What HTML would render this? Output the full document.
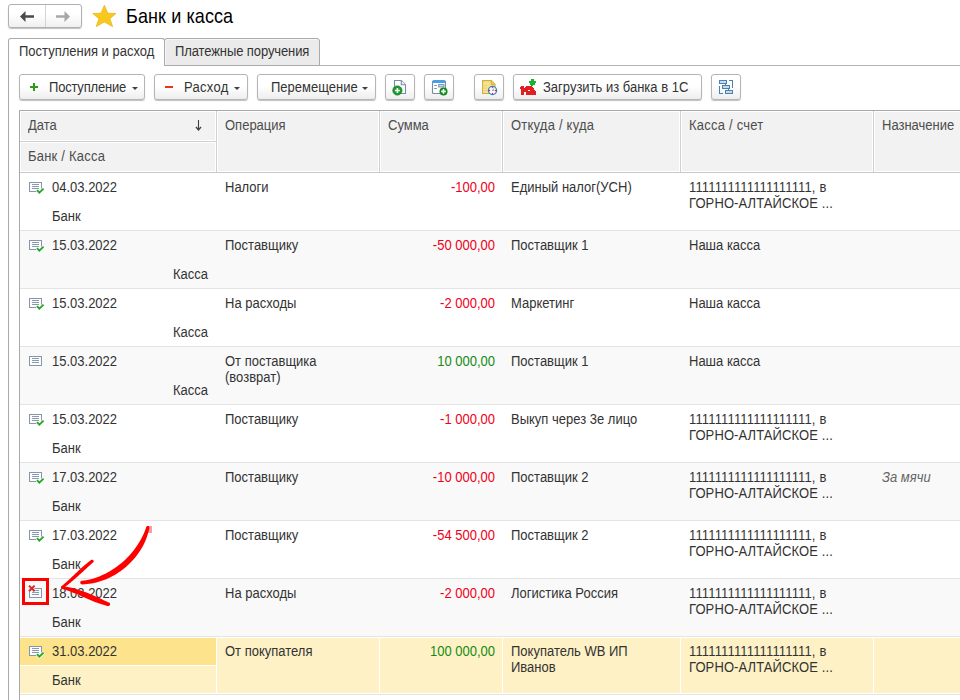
<!DOCTYPE html>
<html><head><meta charset="utf-8">
<style>
*{box-sizing:border-box;margin:0;padding:0}
html,body{width:960px;height:700px;overflow:hidden;background:#fff;font-family:"Liberation Sans",sans-serif;font-size:13px;color:#333}
.a{position:absolute}
.t{position:absolute;white-space:pre;line-height:16px;transform:scaleY(1.06);transform-origin:0 12px}
.btn{position:absolute;top:74px;height:26px;border:1px solid #b5b5b5;border-radius:3px;background:linear-gradient(#fff 0%,#fff 45%,#eeeeee 100%);box-shadow:0 1px 1px rgba(0,0,0,.25)}
.hd{position:absolute;background:#f2f2f2;border:1px solid #fff}
.row{position:absolute;left:20px;width:940px;height:58px}
.vd{position:absolute;width:1px;background:#d0d0d0}
</style></head><body>

<!-- nav buttons -->
<div class="a" style="left:8px;top:4px;width:74px;height:24px;border:1px solid #b0b0b0;border-radius:3px;background:linear-gradient(#fff 0%,#fff 40%,#f0f0f0 100%);box-shadow:0 1px 1px rgba(0,0,0,.25)"></div>
<div class="a" style="left:45px;top:5px;width:1px;height:22px;background:#d4d4d4"></div>
<svg class="a" style="left:19px;top:10px" width="16" height="13" viewBox="0 0 16 13"><path d="M1 6.5 L6.5 1 L6.5 5.3 L15 5.3 L15 7.7 L6.5 7.7 L6.5 12 Z" fill="#4a4a4a"/></svg>
<svg class="a" style="left:55px;top:10px" width="16" height="13" viewBox="0 0 16 13"><path d="M15 6.5 L9.5 1 L9.5 5.3 L1 5.3 L1 7.7 L9.5 7.7 L9.5 12 Z" fill="#a8a8a8"/></svg>
<!-- star -->
<svg class="a" style="left:88px;top:0" width="34" height="32" viewBox="88 0 34 32"><path d="M104.4 5.3L107.8 13.2L116 13.5L109.9 18.7L112.6 26.6L104.4 22L96.2 26.6L98.9 18.7L92.8 13.5L101 13.2Z" fill="#f8c91c" stroke="#e6b20e" stroke-width=".7" stroke-linejoin="round"/></svg>
<div class="t" style="left:126px;top:7px;font-size:18px;line-height:20px;color:#000;transform:scaleY(1.1);transform-origin:0 16px;letter-spacing:.1px">Банк и касса</div>

<!-- tabs -->
<div class="a" style="left:164px;top:65px;width:796px;height:1px;background:#b4b4b4"></div>
<div class="a" style="left:8px;top:38px;width:157px;height:28px;border:1px solid #aaaaaa;border-bottom:none;border-radius:3px 3px 0 0;background:#fff"></div>
<div class="a" style="left:8px;top:60px;width:1px;height:640px;background:#aaaaaa"></div>
<div class="a" style="left:164px;top:38px;width:156px;height:28px;border:1px solid #aaaaaa;border-radius:3px 3px 0 0;background:#ebebeb;box-shadow:inset 1px 1px 0 #f6f6f6"></div>
<div class="t" style="left:19px;top:44px">Поступления и расход</div>
<div class="t" style="left:175px;top:44px;letter-spacing:-.1px">Платежные поручения</div>

<!-- toolbar -->
<div class="btn" style="left:19px;width:126px"></div>
<div class="a" style="left:30px;top:86px;width:8px;height:2px;background:#2f9a14"></div><div class="a" style="left:33px;top:83px;width:2px;height:8px;background:#2f9a14"></div>
<div class="t" style="left:49px;top:80px;letter-spacing:-.2px">Поступление</div>
<svg class="a" style="left:132px;top:87px" width="6" height="3"><path d="M0 0H6L3 3Z" fill="#404040"/></svg>

<div class="btn" style="left:154px;width:94px"></div>
<div class="a" style="left:165px;top:86px;width:8px;height:2px;background:#ec3418"></div>
<div class="t" style="left:184px;top:80px;letter-spacing:.3px">Расход</div>
<svg class="a" style="left:234px;top:87px" width="6" height="3"><path d="M0 0H6L3 3Z" fill="#404040"/></svg>

<div class="btn" style="left:257px;width:119px"></div>
<div class="t" style="left:271px;top:80px">Перемещение</div>
<svg class="a" style="left:362px;top:87px" width="6" height="3"><path d="M0 0H6L3 3Z" fill="#404040"/></svg>

<div class="btn" style="left:385px;width:30px"></div>
<div class="btn" style="left:424px;width:30px"></div>
<div class="btn" style="left:474px;width:30px"></div>
<div class="btn" style="left:513px;width:189px"></div><svg class="a" style="left:385px;top:74px" width="30" height="25" viewBox="0 0 30 25"><path d="M9.5 6.5H16.3L20.5 10.7V19.5H9.5Z" fill="#fff" stroke="#7b8da2" stroke-width="1.1"/><path d="M16.3 6.5V10.7H20.5" fill="#eef2f6" stroke="#7b8da2" stroke-width="1.1"/><circle cx="12.4" cy="16.5" r="4.6" fill="#1d9a2c"/><circle cx="12.4" cy="16.5" r="4.6" fill="none" stroke="#0f7f1c" stroke-width=".8"/><path d="M12.4 14V19M9.9 16.5H14.9" stroke="#fff" stroke-width="1.6"/></svg><svg class="a" style="left:424px;top:74px" width="30" height="25" viewBox="0 0 30 25"><rect x="8.5" y="7" width="13" height="12.5" rx="1" fill="#fff" stroke="#7d8a99" stroke-width="1.1"/><path d="M8 8.5Q8 6 10 6H20Q22 6 22 8.5V9H8Z" fill="#4d9de4"/><path d="M10.2 11.5H12.8M10.2 14.5H12.8" stroke="#6f8fb3" stroke-width="1.1"/><rect x="14.7" y="10.6" width="5.2" height="2.3" fill="#d6e4f2" stroke="#6f8fb3" stroke-width="1"/><circle cx="19.5" cy="17.4" r="4" fill="#0d8a18"/><path d="M19.5 15.1V19.7M17.2 17.4H21.8" stroke="#fff" stroke-width="1.6"/></svg><svg class="a" style="left:474px;top:74px" width="30" height="25" viewBox="0 0 30 25"><path d="M8.6 6.6H17.3L21 10.3V19.5H8.6Z" fill="#f6e28c" stroke="#d3ae3e" stroke-width="1.1"/><path d="M17.3 6.6V10.3H21" fill="#e9cf6a" stroke="#d3ae3e" stroke-width="1"/><path d="M10.5 11.5H13M10.5 14H12.5M10.5 16.5H12.5" stroke="#e2c970" stroke-width=".8"/><circle cx="18.5" cy="16.5" r="4.1" fill="#fff" stroke="#3f7db9" stroke-width="1.3"/><circle cx="18.5" cy="13.6" r=".7" fill="#e02424"/><circle cx="18.5" cy="19.4" r=".7" fill="#e02424"/><circle cx="15.6" cy="16.5" r=".7" fill="#e02424"/><circle cx="21.4" cy="16.5" r=".7" fill="#e02424"/><path d="M18.5 16.5L19.8 14.6M18.5 16.5H19.6" stroke="#4a7fc0" stroke-width=".9"/></svg><svg class="a" style="left:516px;top:76px" width="24" height="22" viewBox="0 0 24 22" shape-rendering="crispEdges"><rect x="5" y="10" width="3" height="1" fill="#e02020"/><rect x="10" y="10" width="6" height="1" fill="#e02020"/><rect x="4" y="11" width="4" height="1" fill="#e02020"/><rect x="9" y="11" width="8" height="1" fill="#e02020"/><rect x="4" y="12" width="5" height="1" fill="#e02020"/><rect x="9" y="12" width="9" height="1" fill="#e02020"/><rect x="5" y="13" width="13" height="1" fill="#e02020"/><rect x="5" y="14" width="7" height="1" fill="#e02020"/><rect x="14" y="14" width="5" height="1" fill="#e02020"/><rect x="5" y="15" width="15" height="1" fill="#e02020"/><rect x="5" y="16" width="3" height="1" fill="#e02020"/><rect x="10" y="16" width="10" height="1" fill="#e02020"/><rect x="5" y="17" width="3" height="1" fill="#e02020"/><rect x="10" y="17" width="10" height="1" fill="#e02020"/><rect x="5" y="18" width="3" height="1" fill="#e02020"/><rect x="10" y="18" width="10" height="1" fill="#e02020"/><rect x="15" y="3" width="3" height="1" fill="#14b52e"/><rect x="15" y="4" width="3" height="1" fill="#14b52e"/><rect x="13" y="5" width="7" height="1" fill="#14b52e"/><rect x="13" y="6" width="7" height="1" fill="#14b52e"/><rect x="14" y="7" width="5" height="1" fill="#14b52e"/><rect x="14" y="8" width="5" height="1" fill="#14b52e"/><rect x="15" y="9" width="2" height="1" fill="#14b52e"/></svg>
<div class="t" style="left:543px;top:80px">Загрузить из банка в 1С</div>
<div class="btn" style="left:711px;width:30px"></div><svg class="a" style="left:715px;top:76px" width="22" height="22" viewBox="0 0 22 22" shape-rendering="crispEdges"><rect x="4" y="4" width="8" height="4" fill="#4b80b1"/><rect x="5" y="5" width="6" height="2" fill="#c6daee"/><rect x="7" y="9" width="8" height="4" fill="#4b80b1"/><rect x="8" y="10" width="6" height="2" fill="#c6daee"/><rect x="10" y="14" width="8" height="4" fill="#4b80b1"/><rect x="11" y="15" width="6" height="2" fill="#c6daee"/><rect x="10" y="8" width="1" height="1" fill="#4b80b1"/><rect x="13" y="13" width="1" height="1" fill="#4b80b1"/><rect x="4" y="10" width="1" height="8" fill="#4b80b1"/><rect x="4" y="17" width="4" height="1" fill="#4b80b1"/><rect x="14" y="4" width="4" height="1" fill="#4b80b1"/><rect x="17" y="4" width="1" height="8" fill="#4b80b1"/></svg>

<!-- table -->
<div class="a" style="left:19px;top:110px;width:941px;height:590px;border-left:1px solid #a8a8a8;border-top:1px solid #a8a8a8"></div>
<!-- header -->
<div class="a" style="left:20px;top:111px;width:940px;height:61px;background:#fff"></div>
<div class="hd" style="left:20px;top:111px;width:196px;height:30px"></div>
<div class="hd" style="left:20px;top:142px;width:196px;height:30px"></div>
<div class="hd" style="left:217px;top:111px;width:162px;height:61px"></div>
<div class="hd" style="left:380px;top:111px;width:122px;height:61px"></div>
<div class="hd" style="left:503px;top:111px;width:177px;height:61px"></div>
<div class="hd" style="left:681px;top:111px;width:192px;height:61px"></div>
<div class="hd" style="left:874px;top:111px;width:90px;height:61px"></div>
<div class="a" style="left:20px;top:141px;width:196px;height:1px;background:#d0d0d0"></div>
<div class="vd" style="left:216px;top:111px;height:61px"></div>
<div class="vd" style="left:379px;top:111px;height:61px"></div>
<div class="vd" style="left:502px;top:111px;height:61px"></div>
<div class="vd" style="left:680px;top:111px;height:61px"></div>
<div class="vd" style="left:873px;top:111px;height:61px"></div>
<div class="a" style="left:20px;top:172px;width:940px;height:1px;background:#c8c8c8"></div>
<div class="t" style="left:28px;top:118px;color:#4d4d4d">Дата</div>
<svg class="a" style="left:194px;top:118px" width="10" height="14" viewBox="0 0 10 14"><path d="M4.5 2V11" stroke="#404040" stroke-width="1.1"/><path d="M2 9L4.5 12L7 9" fill="none" stroke="#404040" stroke-width="1.3"/></svg>
<div class="t" style="left:28px;top:149px;color:#4d4d4d;letter-spacing:.22px">Банк / Касса</div>
<div class="t" style="left:225px;top:118px;color:#4d4d4d">Операция</div>
<div class="t" style="left:388px;top:118px;color:#4d4d4d">Сумма</div>
<div class="t" style="left:511px;top:118px;color:#4d4d4d;letter-spacing:.22px">Откуда / куда</div>
<div class="t" style="left:689px;top:118px;color:#4d4d4d;letter-spacing:.22px">Касса / счет</div>
<div class="t" style="left:882px;top:118px;color:#4d4d4d">Назначение</div>

<div class="a" style="left:20px;top:173px;width:940px;height:57px;background:#fff"></div>
<div class="a" style="left:20px;top:230px;width:940px;height:1px;background:#e4e4e4"></div>
<svg class="a" style="left:28px;top:181px" width="17" height="14" viewBox="0 0 17 14"><rect x="1.5" y="1.5" width="12" height="9" fill="#fbfcfd" stroke="#8796aa" stroke-width="1"/><path d="M4 3.5h7M4 5.5h7M4 7.5h7" stroke="#8d9aab" stroke-width="1"/><path d="M9 9.2 L11.3 11.6 L15.6 7.6" fill="none" stroke="#fff" stroke-width="3"/><path d="M9 9.2 L11.3 11.6 L15.6 7.6" fill="none" stroke="#26a826" stroke-width="1.9"/></svg>
<div class="t" style="left:52px;top:180px">04.03.2022</div>
<div class="t" style="left:52px;top:209px">Банк</div>
<div class="t" style="left:225px;top:180px">Налоги</div>
<div class="t" style="left:380px;width:115px;text-align:right;top:180px;color:#f00018">-100,00</div>
<div class="t" style="left:511px;top:180px">Единый налог(УСН)</div>
<div class="t" style="left:689px;top:180px;letter-spacing:.15px">1111111111111111111, в</div>
<div class="t" style="left:689px;top:196px;letter-spacing:.1px">ГОРНО-АЛТАЙСКОЕ ...</div>
<div class="a" style="left:20px;top:231px;width:940px;height:57px;background:#f9f9f9"></div>
<div class="a" style="left:20px;top:288px;width:940px;height:1px;background:#e4e4e4"></div>
<svg class="a" style="left:28px;top:239px" width="17" height="14" viewBox="0 0 17 14"><rect x="1.5" y="1.5" width="12" height="9" fill="#fbfcfd" stroke="#8796aa" stroke-width="1"/><path d="M4 3.5h7M4 5.5h7M4 7.5h7" stroke="#8d9aab" stroke-width="1"/><path d="M9 9.2 L11.3 11.6 L15.6 7.6" fill="none" stroke="#fff" stroke-width="3"/><path d="M9 9.2 L11.3 11.6 L15.6 7.6" fill="none" stroke="#26a826" stroke-width="1.9"/></svg>
<div class="t" style="left:52px;top:238px">15.03.2022</div>
<div class="t" style="left:100px;width:108px;text-align:right;top:267px">Касса</div>
<div class="t" style="left:225px;top:238px">Поставщику</div>
<div class="t" style="left:380px;width:115px;text-align:right;top:238px;color:#f00018">-50 000,00</div>
<div class="t" style="left:511px;top:238px">Поставщик 1</div>
<div class="t" style="left:689px;top:238px">Наша касса</div>
<div class="a" style="left:20px;top:289px;width:940px;height:57px;background:#fff"></div>
<div class="a" style="left:20px;top:346px;width:940px;height:1px;background:#e4e4e4"></div>
<svg class="a" style="left:28px;top:297px" width="17" height="14" viewBox="0 0 17 14"><rect x="1.5" y="1.5" width="12" height="9" fill="#fbfcfd" stroke="#8796aa" stroke-width="1"/><path d="M4 3.5h7M4 5.5h7M4 7.5h7" stroke="#8d9aab" stroke-width="1"/><path d="M9 9.2 L11.3 11.6 L15.6 7.6" fill="none" stroke="#fff" stroke-width="3"/><path d="M9 9.2 L11.3 11.6 L15.6 7.6" fill="none" stroke="#26a826" stroke-width="1.9"/></svg>
<div class="t" style="left:52px;top:296px">15.03.2022</div>
<div class="t" style="left:100px;width:108px;text-align:right;top:325px">Касса</div>
<div class="t" style="left:225px;top:296px">На расходы</div>
<div class="t" style="left:380px;width:115px;text-align:right;top:296px;color:#f00018">-2 000,00</div>
<div class="t" style="left:511px;top:296px">Маркетинг</div>
<div class="t" style="left:689px;top:296px">Наша касса</div>
<div class="a" style="left:20px;top:347px;width:940px;height:57px;background:#f9f9f9"></div>
<div class="a" style="left:20px;top:404px;width:940px;height:1px;background:#e4e4e4"></div>
<svg class="a" style="left:28px;top:355px" width="17" height="14" viewBox="0 0 17 14"><rect x="1.5" y="1.5" width="12" height="9" fill="#fbfcfd" stroke="#8796aa" stroke-width="1"/><path d="M4 3.5h7M4 5.5h7M4 7.5h7" stroke="#8d9aab" stroke-width="1"/></svg>
<div class="t" style="left:52px;top:354px">15.03.2022</div>
<div class="t" style="left:100px;width:108px;text-align:right;top:383px">Касса</div>
<div class="t" style="left:225px;top:354px">От поставщика</div>
<div class="t" style="left:225px;top:370px">(возврат)</div>
<div class="t" style="left:380px;width:115px;text-align:right;top:354px;color:#158a14">10 000,00</div>
<div class="t" style="left:511px;top:354px">Поставщик 1</div>
<div class="t" style="left:689px;top:354px">Наша касса</div>
<div class="a" style="left:20px;top:405px;width:940px;height:57px;background:#fff"></div>
<div class="a" style="left:20px;top:462px;width:940px;height:1px;background:#e4e4e4"></div>
<svg class="a" style="left:28px;top:413px" width="17" height="14" viewBox="0 0 17 14"><rect x="1.5" y="1.5" width="12" height="9" fill="#fbfcfd" stroke="#8796aa" stroke-width="1"/><path d="M4 3.5h7M4 5.5h7M4 7.5h7" stroke="#8d9aab" stroke-width="1"/><path d="M9 9.2 L11.3 11.6 L15.6 7.6" fill="none" stroke="#fff" stroke-width="3"/><path d="M9 9.2 L11.3 11.6 L15.6 7.6" fill="none" stroke="#26a826" stroke-width="1.9"/></svg>
<div class="t" style="left:52px;top:412px">15.03.2022</div>
<div class="t" style="left:52px;top:441px">Банк</div>
<div class="t" style="left:225px;top:412px">Поставщику</div>
<div class="t" style="left:380px;width:115px;text-align:right;top:412px;color:#f00018">-1 000,00</div>
<div class="t" style="left:511px;top:412px">Выкуп через 3е лицо</div>
<div class="t" style="left:689px;top:412px;letter-spacing:.15px">1111111111111111111, в</div>
<div class="t" style="left:689px;top:428px;letter-spacing:.1px">ГОРНО-АЛТАЙСКОЕ ...</div>
<div class="a" style="left:20px;top:463px;width:940px;height:57px;background:#f9f9f9"></div>
<div class="a" style="left:20px;top:520px;width:940px;height:1px;background:#e4e4e4"></div>
<svg class="a" style="left:28px;top:471px" width="17" height="14" viewBox="0 0 17 14"><rect x="1.5" y="1.5" width="12" height="9" fill="#fbfcfd" stroke="#8796aa" stroke-width="1"/><path d="M4 3.5h7M4 5.5h7M4 7.5h7" stroke="#8d9aab" stroke-width="1"/><path d="M9 9.2 L11.3 11.6 L15.6 7.6" fill="none" stroke="#fff" stroke-width="3"/><path d="M9 9.2 L11.3 11.6 L15.6 7.6" fill="none" stroke="#26a826" stroke-width="1.9"/></svg>
<div class="t" style="left:52px;top:470px">17.03.2022</div>
<div class="t" style="left:52px;top:499px">Банк</div>
<div class="t" style="left:225px;top:470px">Поставщику</div>
<div class="t" style="left:380px;width:115px;text-align:right;top:470px;color:#f00018">-10 000,00</div>
<div class="t" style="left:511px;top:470px">Поставщик 2</div>
<div class="t" style="left:689px;top:470px;letter-spacing:.15px">1111111111111111111, в</div>
<div class="t" style="left:689px;top:486px;letter-spacing:.1px">ГОРНО-АЛТАЙСКОЕ ...</div>
<div class="t" style="left:882px;top:470px;font-style:italic;color:#666">За мячи</div>
<div class="a" style="left:20px;top:521px;width:940px;height:57px;background:#fff"></div>
<div class="a" style="left:20px;top:578px;width:940px;height:1px;background:#e4e4e4"></div>
<svg class="a" style="left:28px;top:529px" width="17" height="14" viewBox="0 0 17 14"><rect x="1.5" y="1.5" width="12" height="9" fill="#fbfcfd" stroke="#8796aa" stroke-width="1"/><path d="M4 3.5h7M4 5.5h7M4 7.5h7" stroke="#8d9aab" stroke-width="1"/><path d="M9 9.2 L11.3 11.6 L15.6 7.6" fill="none" stroke="#fff" stroke-width="3"/><path d="M9 9.2 L11.3 11.6 L15.6 7.6" fill="none" stroke="#26a826" stroke-width="1.9"/></svg>
<div class="t" style="left:52px;top:528px">17.03.2022</div>
<div class="t" style="left:52px;top:557px">Банк</div>
<div class="t" style="left:225px;top:528px">Поставщику</div>
<div class="t" style="left:380px;width:115px;text-align:right;top:528px;color:#f00018">-54 500,00</div>
<div class="t" style="left:511px;top:528px">Поставщик 2</div>
<div class="t" style="left:689px;top:528px;letter-spacing:.15px">1111111111111111111, в</div>
<div class="t" style="left:689px;top:544px;letter-spacing:.1px">ГОРНО-АЛТАЙСКОЕ ...</div>
<div class="a" style="left:20px;top:579px;width:940px;height:57px;background:#f9f9f9"></div>
<div class="a" style="left:20px;top:636px;width:940px;height:1px;background:#e4e4e4"></div>
<svg class="a" style="left:28px;top:584px" width="17" height="16" viewBox="0 0 17 16"><rect x="1.5" y="4.5" width="12" height="9" fill="#fbfcfd" stroke="#8796aa" stroke-width="1"/><path d="M4 6.5h7M4 8.5h7M4 10.5h7" stroke="#8d9aab" stroke-width="1"/><path d="M1 1.6L6.6 7.2M6.6 1.6L1 7.2" stroke="#fff" stroke-width="3.2"/><path d="M1 1.6L6.6 7.2M6.6 1.6L1 7.2" stroke="#d42828" stroke-width="2"/></svg>
<div class="t" style="left:52px;top:586px">18.03.2022</div>
<div class="t" style="left:52px;top:615px">Банк</div>
<div class="t" style="left:225px;top:586px">На расходы</div>
<div class="t" style="left:380px;width:115px;text-align:right;top:586px;color:#f00018">-2 000,00</div>
<div class="t" style="left:511px;top:586px">Логистика Россия</div>
<div class="t" style="left:689px;top:586px;letter-spacing:.15px">1111111111111111111, в</div>
<div class="t" style="left:689px;top:602px;letter-spacing:.1px">ГОРНО-АЛТАЙСКОЕ ...</div>
<div class="a" style="left:20px;top:637px;width:940px;height:57px;background:#fff"></div>
<div class="a" style="left:20px;top:638px;width:940px;height:55px;background:#fdf1c5"></div>
<div class="a" style="left:20px;top:638px;width:196px;height:27px;background:#fde38c"></div>
<div class="a" style="left:20px;top:665px;width:196px;height:1px;background:#fff"></div>
<div class="a" style="left:216px;top:637px;width:1px;height:57px;background:#fff"></div>
<div class="a" style="left:379px;top:637px;width:1px;height:57px;background:#fff"></div>
<div class="a" style="left:502px;top:637px;width:1px;height:57px;background:#fff"></div>
<div class="a" style="left:680px;top:637px;width:1px;height:57px;background:#fff"></div>
<div class="a" style="left:873px;top:637px;width:1px;height:57px;background:#fff"></div>
<div class="a" style="left:20px;top:694px;width:940px;height:1px;background:#e4e4e4"></div>
<svg class="a" style="left:28px;top:645px" width="17" height="14" viewBox="0 0 17 14"><rect x="1.5" y="1.5" width="12" height="9" fill="#fbfcfd" stroke="#8796aa" stroke-width="1"/><path d="M4 3.5h7M4 5.5h7M4 7.5h7" stroke="#8d9aab" stroke-width="1"/><path d="M9 9.2 L11.3 11.6 L15.6 7.6" fill="none" stroke="#fff" stroke-width="3"/><path d="M9 9.2 L11.3 11.6 L15.6 7.6" fill="none" stroke="#26a826" stroke-width="1.9"/></svg>
<div class="t" style="left:52px;top:644px">31.03.2022</div>
<div class="t" style="left:52px;top:673px">Банк</div>
<div class="t" style="left:225px;top:644px">От покупателя</div>
<div class="t" style="left:380px;width:115px;text-align:right;top:644px;color:#158a14">100 000,00</div>
<div class="t" style="left:511px;top:644px">Покупатель WB ИП</div>
<div class="t" style="left:511px;top:660px">Иванов</div>
<div class="t" style="left:689px;top:644px;letter-spacing:.15px">1111111111111111111, в</div>
<div class="t" style="left:689px;top:660px;letter-spacing:.1px">ГОРНО-АЛТАЙСКОЕ ...</div>
<svg class="a" style="left:0;top:0" width="960" height="700"><rect x="23.5" y="579.5" width="24" height="24" fill="none" stroke="#ff0000" stroke-width="3"/><rect x="148" y="526" width="4" height="7" fill="rgba(255,40,40,.45)"/><path d="M146.26 527.08 L145.52 529.24 L144.71 531.34 L143.82 533.41 L142.87 535.44 L141.85 537.45 L140.81 539.45 L139.71 541.41 L138.55 543.34 L137.32 545.23 L136.03 547.09 L134.72 548.93 L133.35 550.73 L131.92 552.49 L130.43 554.21 L128.91 555.90 L127.34 557.55 L125.73 559.15 L124.07 560.71 L122.36 562.22 L120.62 563.69 L118.85 565.12 L117.03 566.49 L115.18 567.81 L113.29 569.08 L111.38 570.30 L109.43 571.47 L107.46 572.58 L105.45 573.63 L103.41 574.61 L101.36 575.55 L99.28 576.43 L97.18 577.24 L95.05 577.97 L92.90 578.64 L90.73 579.23 L88.54 579.74 L86.33 580.18 L84.11 580.53 L81.85 580.81 L81.08 581.05 L80.50 581.60 L80.22 582.35 L80.29 583.15 L80.69 583.84 L81.36 584.28 L82.15 584.39 L84.50 584.28 L86.88 584.07 L89.26 583.77 L91.62 583.39 L93.97 582.93 L96.32 582.38 L98.64 581.75 L100.95 581.05 L103.24 580.27 L105.50 579.40 L107.73 578.44 L109.93 577.41 L112.11 576.31 L114.25 575.15 L116.35 573.90 L118.41 572.58 L120.43 571.19 L122.40 569.75 L124.34 568.24 L126.22 566.67 L128.04 565.03 L129.81 563.34 L131.53 561.60 L133.20 559.81 L134.80 557.96 L136.33 556.05 L137.80 554.11 L139.20 552.12 L140.55 550.09 L141.80 548.01 L142.97 545.90 L144.08 543.75 L145.10 541.57 L146.06 539.36 L146.89 537.10 L147.63 534.83 L148.29 532.53 L148.86 530.22 L149.34 527.92 L149.37 527.21 L149.09 526.56 L148.56 526.09 L147.87 525.90 L147.17 526.03 L146.59 526.45Z" fill="#ff0000"/><path d="M91.10 559.95 L90.29 560.57 L89.48 561.21 L88.67 561.84 L87.87 562.49 L87.08 563.13 L86.29 563.78 L85.50 564.44 L84.72 565.10 L83.94 565.76 L83.16 566.43 L82.39 567.09 L81.62 567.76 L80.85 568.43 L80.11 569.13 L79.37 569.84 L78.64 570.54 L77.90 571.24 L77.17 571.94 L76.44 572.64 L75.70 573.34 L74.97 574.04 L74.24 574.74 L73.50 575.43 L72.77 576.12 L72.03 576.81 L71.29 577.50 L70.56 578.20 L69.83 578.89 L69.10 579.57 L68.36 580.26 L67.62 580.94 L66.87 581.61 L66.12 582.28 L65.37 582.94 L64.61 583.60 L63.85 584.25 L63.08 584.89 L62.30 585.53 L61.52 586.16 L61.14 586.61 L61.00 587.17 L61.11 587.73 L61.46 588.20 L61.98 588.46 L62.56 588.47 L63.08 588.24 L63.92 587.64 L64.75 587.04 L65.58 586.43 L66.40 585.81 L67.21 585.19 L68.02 584.56 L68.83 583.93 L69.63 583.29 L70.42 582.64 L71.21 581.99 L72.00 581.34 L72.78 580.69 L73.57 580.03 L74.33 579.36 L75.10 578.68 L75.86 578.01 L76.62 577.33 L77.38 576.65 L78.14 575.97 L78.89 575.29 L79.65 574.61 L80.40 573.94 L81.16 573.26 L81.91 572.58 L82.66 571.91 L83.42 571.23 L84.15 570.54 L84.88 569.84 L85.61 569.15 L86.35 568.46 L87.08 567.77 L87.82 567.09 L88.56 566.41 L89.31 565.74 L90.06 565.07 L90.81 564.41 L91.57 563.75 L92.33 563.10 L93.10 562.45 L93.54 561.89 L93.70 561.19 L93.54 560.50 L93.09 559.95 L92.45 559.64 L91.74 559.64Z" fill="#ff0000"/><path d="M62.02 588.67 L63.22 589.03 L64.41 589.41 L65.59 589.80 L66.76 590.20 L67.92 590.63 L69.08 591.06 L70.23 591.51 L71.38 591.97 L72.52 592.44 L73.66 592.92 L74.81 593.37 L75.95 593.84 L77.10 594.31 L78.23 594.80 L79.37 595.29 L80.51 595.79 L81.64 596.29 L82.78 596.81 L83.91 597.32 L85.05 597.82 L86.20 598.30 L87.36 598.78 L88.51 599.26 L89.66 599.75 L90.82 600.24 L91.98 600.73 L93.14 601.21 L94.30 601.70 L95.47 602.18 L96.66 602.61 L97.86 603.01 L99.06 603.41 L100.27 603.80 L101.48 604.18 L102.69 604.56 L103.91 604.93 L105.13 605.30 L106.35 605.65 L107.57 605.99 L108.41 606.09 L109.21 605.81 L109.81 605.21 L110.09 604.42 L109.99 603.57 L109.55 602.86 L108.83 602.41 L107.68 601.92 L106.55 601.42 L105.41 600.91 L104.28 600.40 L103.15 599.88 L102.03 599.35 L100.91 598.81 L99.78 598.27 L98.66 597.72 L97.53 597.19 L96.38 596.71 L95.23 596.23 L94.07 595.75 L92.92 595.26 L91.76 594.77 L90.60 594.29 L89.44 593.80 L88.28 593.31 L87.11 592.83 L85.94 592.37 L84.75 591.94 L83.55 591.52 L82.36 591.10 L81.16 590.68 L79.95 590.28 L78.75 589.88 L77.54 589.49 L76.32 589.10 L75.11 588.73 L73.87 588.40 L72.63 588.09 L71.39 587.79 L70.14 587.51 L68.89 587.24 L67.64 586.98 L66.38 586.74 L65.11 586.52 L63.84 586.32 L62.58 586.13 L62.00 586.13 L61.48 586.39 L61.13 586.84 L61.00 587.41 L61.13 587.97 L61.50 588.42Z" fill="#ff0000"/></svg>
</body></html>
